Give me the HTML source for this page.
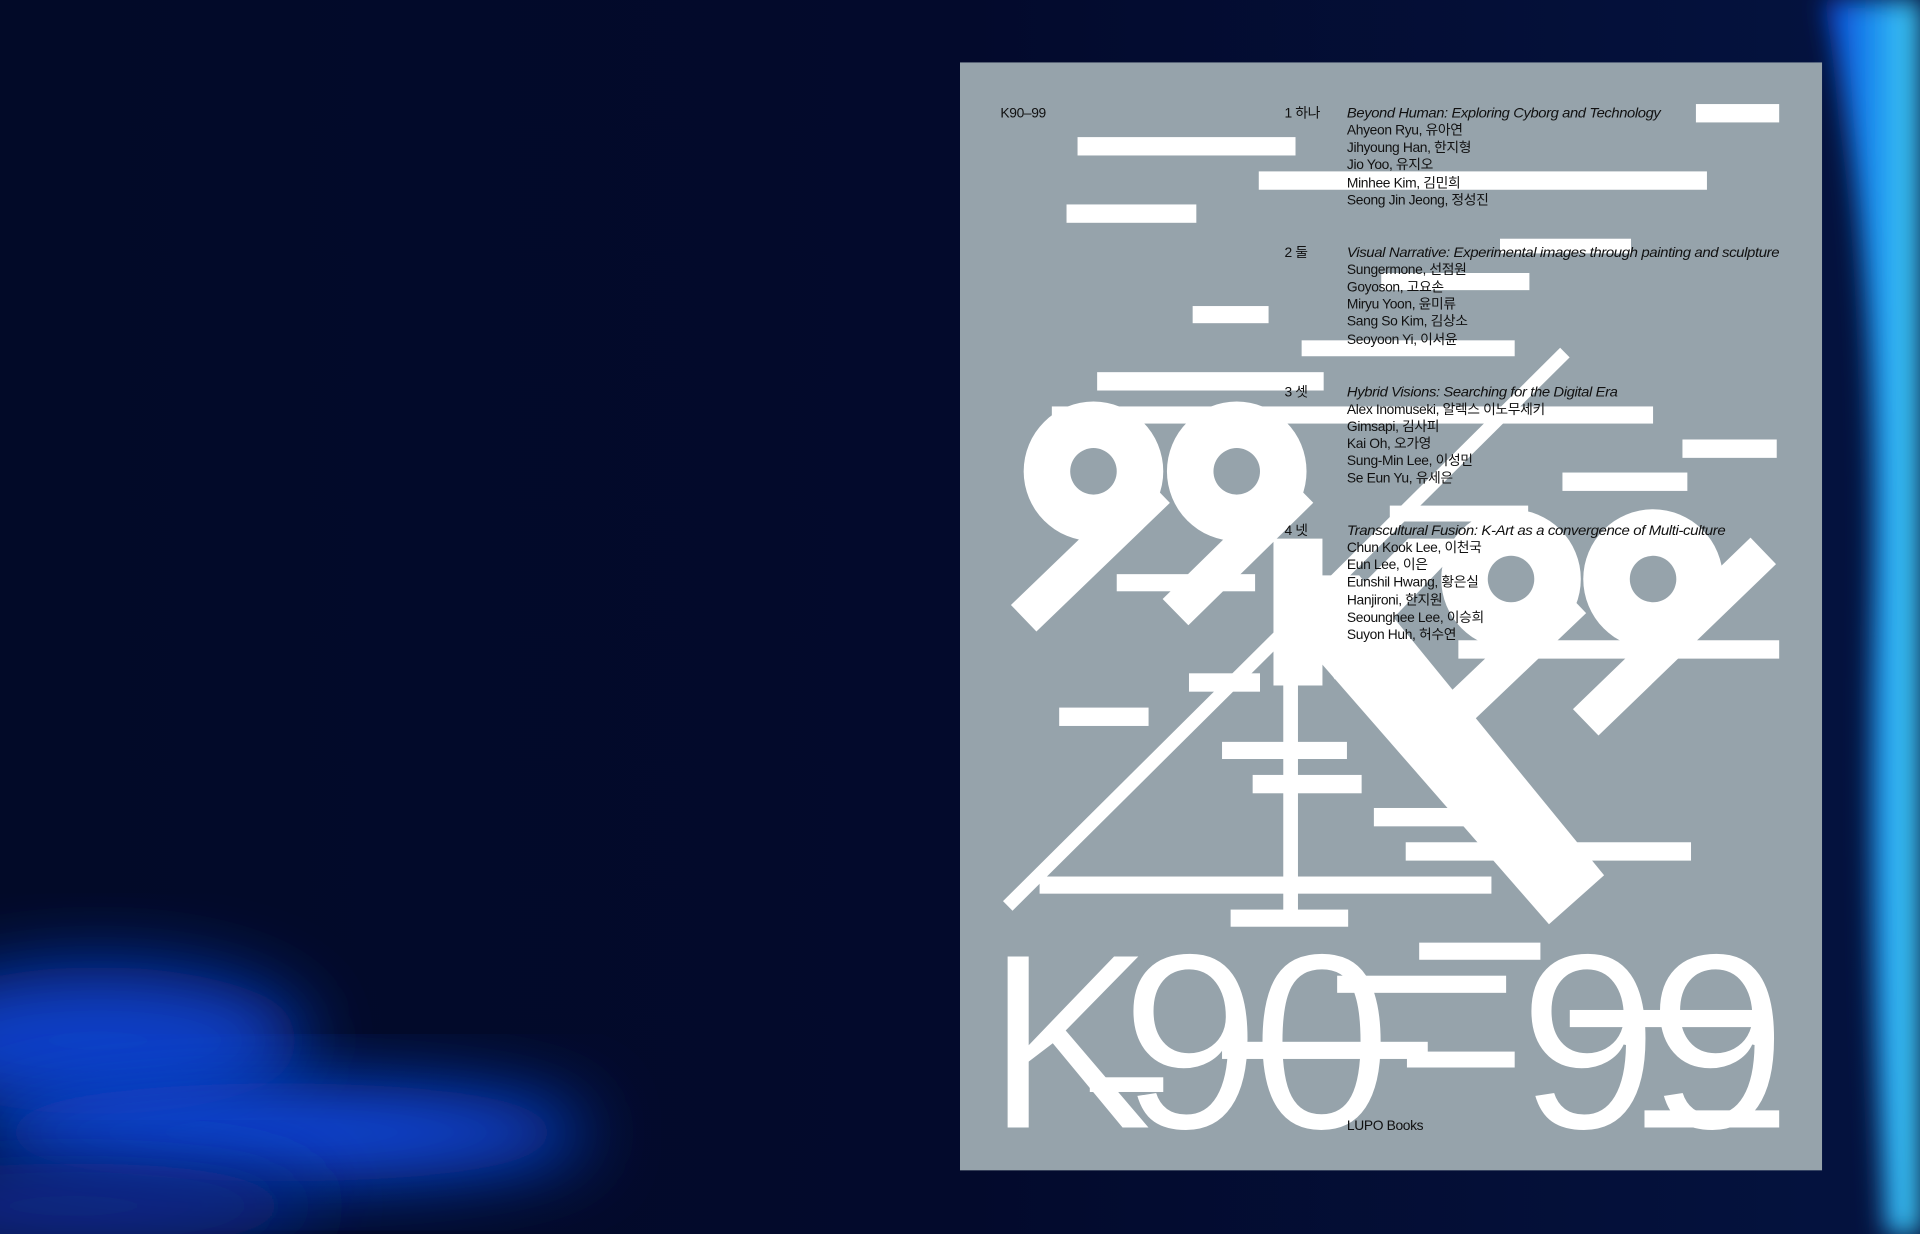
<!DOCTYPE html>
<html><head><meta charset="utf-8"><style>
html,body{margin:0;padding:0;width:1920px;height:1234px;overflow:hidden;background:#020a2c}
svg{display:block}
</style></head><body>
<svg width="1920" height="1234" viewBox="0 0 1568 1008" preserveAspectRatio="none" xmlns="http://www.w3.org/2000/svg">
<defs>
<filter id="b1" x="-50%" y="-50%" width="200%" height="200%"><feGaussianBlur stdDeviation="30"/></filter>
<filter id="b2" x="-50%" y="-50%" width="200%" height="200%"><feGaussianBlur stdDeviation="10"/></filter>
<linearGradient id="bg" x1="0" y1="0" x2="1" y2="0"><stop offset="0" stop-color="#020a28"/><stop offset="0.5" stop-color="#030a2c"/><stop offset="1" stop-color="#041340"/></linearGradient>
<linearGradient id="rg" x1="0" y1="0" x2="1" y2="0"><stop offset="0" stop-color="#0a3bd0"/><stop offset="0.5" stop-color="#1a8ef0"/><stop offset="1" stop-color="#45d4f5"/></linearGradient>
</defs>
<rect width="1568" height="1008" fill="url(#bg)"/>
<ellipse cx="80" cy="850" rx="170" ry="60" fill="#0b3fc8" filter="url(#b1)"/>
<ellipse cx="230" cy="925" rx="250" ry="40" fill="#0c48e0" filter="url(#b1)"/>
<ellipse cx="60" cy="985" rx="200" ry="35" fill="#0a2a90" filter="url(#b1)"/>
<path d="M1490 0 L1568 0 L1568 1008 L1540 1008 Q1525 750 1530 500 Q1535 200 1490 0 Z" fill="url(#rg)" filter="url(#b2)"/>
<rect x="784" y="51" width="704" height="905" fill="#96a3ab"/>
<!-- big title (behind bars) -->
<g font-family="Liberation Sans, sans-serif" font-size="206" fill="#fff" stroke="#96a3ab" stroke-width="2">
<text x="805" y="922">K</text>
<text x="915" y="922">9</text>
<text x="1022" y="922">0</text>
<text x="1240" y="922">9</text>
<text x="1345" y="922">9</text>
</g>
<g fill="#fff">
<circle cx="893" cy="385" r="57"/><circle cx="1010" cy="385" r="57"/>
<line x1="945" y1="400" x2="836" y2="505" stroke="#fff" stroke-width="30"/>
<line x1="1062" y1="400" x2="960" y2="500" stroke="#fff" stroke-width="30"/>
<circle cx="893" cy="385" r="19" fill="#96a3ab"/><circle cx="1010" cy="385" r="19" fill="#96a3ab"/>
<circle cx="1234" cy="473" r="57"/><circle cx="1350" cy="473" r="57"/>
<line x1="1285" y1="490" x2="1180" y2="590" stroke="#fff" stroke-width="30"/>
<line x1="1440" y1="450" x2="1295" y2="590" stroke="#fff" stroke-width="30"/>
<circle cx="1234" cy="473" r="19" fill="#96a3ab"/><circle cx="1350" cy="473" r="19" fill="#96a3ab"/>
<polygon points="1040,440 1080,440 1080,560 1040,560"/>
<polygon points="1060,470 1110,470 1310,715 1265,755 1060,520"/>
<polygon points="1070,520 1150,440 1200,440 1090,555"/>
<line x1="823" y1="740" x2="1278" y2="288" stroke="#fff" stroke-width="11"/>
<rect x="1048" y="535" width="12" height="210"/>
<rect x="1385" y="85" width="68" height="15"/>
<rect x="880" y="112" width="178" height="15"/>
<rect x="1028" y="140" width="366" height="15"/>
<rect x="871" y="167" width="106" height="15"/>
<rect x="1225" y="195" width="107" height="12"/>
<rect x="1128" y="223" width="121" height="14"/>
<rect x="974" y="250" width="62" height="14"/>
<rect x="1063" y="278" width="174" height="13"/>
<rect x="896" y="304" width="185" height="15"/>
<rect x="859" y="332" width="491" height="14"/>
<rect x="1374" y="359" width="77" height="15"/>
<rect x="1276" y="386" width="102" height="15"/>
<rect x="1135" y="413" width="113" height="13"/>
<rect x="912" y="469" width="113" height="14"/>
<rect x="1191" y="523" width="262" height="15"/>
<rect x="971" y="550" width="58" height="15"/>
<rect x="865" y="578" width="73" height="15"/>
<rect x="998" y="606" width="102" height="14"/>
<rect x="1023" y="633" width="89" height="15"/>
<rect x="1122" y="660" width="88" height="15"/>
<rect x="1148" y="688" width="233" height="15"/>
<rect x="849" y="716" width="369" height="14"/>
<rect x="1005" y="743" width="96" height="14"/>
<rect x="1159" y="770" width="99" height="14"/>
<rect x="1092" y="797" width="138" height="14"/>
<rect x="1282" y="825" width="163" height="14"/>
<rect x="998" y="851" width="168" height="14"/>
<rect x="1149" y="859" width="88" height="13"/>
<rect x="1343" y="907" width="110" height="14"/>
<rect x="890" y="880" width="60" height="12"/>
</g>
<g font-family="Liberation Sans, 'Noto Sans CJK KR', sans-serif" font-size="11.3" fill="#111" letter-spacing="-0.3">
<text x="817" y="96">K90–99</text>
<text x="1049" y="96">1 하나</text>
<text x="1100" y="96" font-style="italic" textLength="256" lengthAdjust="spacingAndGlyphs">Beyond Human: Exploring Cyborg and Technology</text>
<text x="1100" y="110">Ahyeon Ryu, 유아연</text>
<text x="1100" y="124">Jihyoung Han, 한지형</text>
<text x="1100" y="138">Jio Yoo, 유지오</text>
<text x="1100" y="153">Minhee Kim, 김민희</text>
<text x="1100" y="167">Seong Jin Jeong, 정성진</text>
<text x="1049" y="210">2 둘</text>
<text x="1100" y="210" font-style="italic" textLength="353" lengthAdjust="spacingAndGlyphs">Visual Narrative: Experimental images through painting and sculpture</text>
<text x="1100" y="224">Sungermone, 선점원</text>
<text x="1100" y="238">Goyoson, 고요손</text>
<text x="1100" y="252">Miryu Yoon, 윤미류</text>
<text x="1100" y="266">Sang So Kim, 김상소</text>
<text x="1100" y="281">Seoyoon Yi, 이서윤</text>
<text x="1049" y="324">3 셋</text>
<text x="1100" y="324" font-style="italic" textLength="221" lengthAdjust="spacingAndGlyphs">Hybrid Visions: Searching for the Digital Era</text>
<text x="1100" y="338">Alex Inomuseki, 알렉스 이노무세키</text>
<text x="1100" y="352">Gimsapi, 김사피</text>
<text x="1100" y="366">Kai Oh, 오가영</text>
<text x="1100" y="380">Sung-Min Lee, 이성민</text>
<text x="1100" y="394">Se Eun Yu, 유세은</text>
<text x="1049" y="437">4 넷</text>
<text x="1100" y="437" font-style="italic" textLength="309" lengthAdjust="spacingAndGlyphs">Transcultural Fusion: K-Art as a convergence of Multi-culture</text>
<text x="1100" y="451">Chun Kook Lee, 이천국</text>
<text x="1100" y="465">Eun Lee, 이은</text>
<text x="1100" y="479">Eunshil Hwang, 황은실</text>
<text x="1100" y="494">Hanjironi, 한지원</text>
<text x="1100" y="508">Seounghee Lee, 이승희</text>
<text x="1100" y="522">Suyon Huh, 허수연</text>
<text x="1100" y="923">LUPO Books</text>
</g>
</svg>
</body></html>
